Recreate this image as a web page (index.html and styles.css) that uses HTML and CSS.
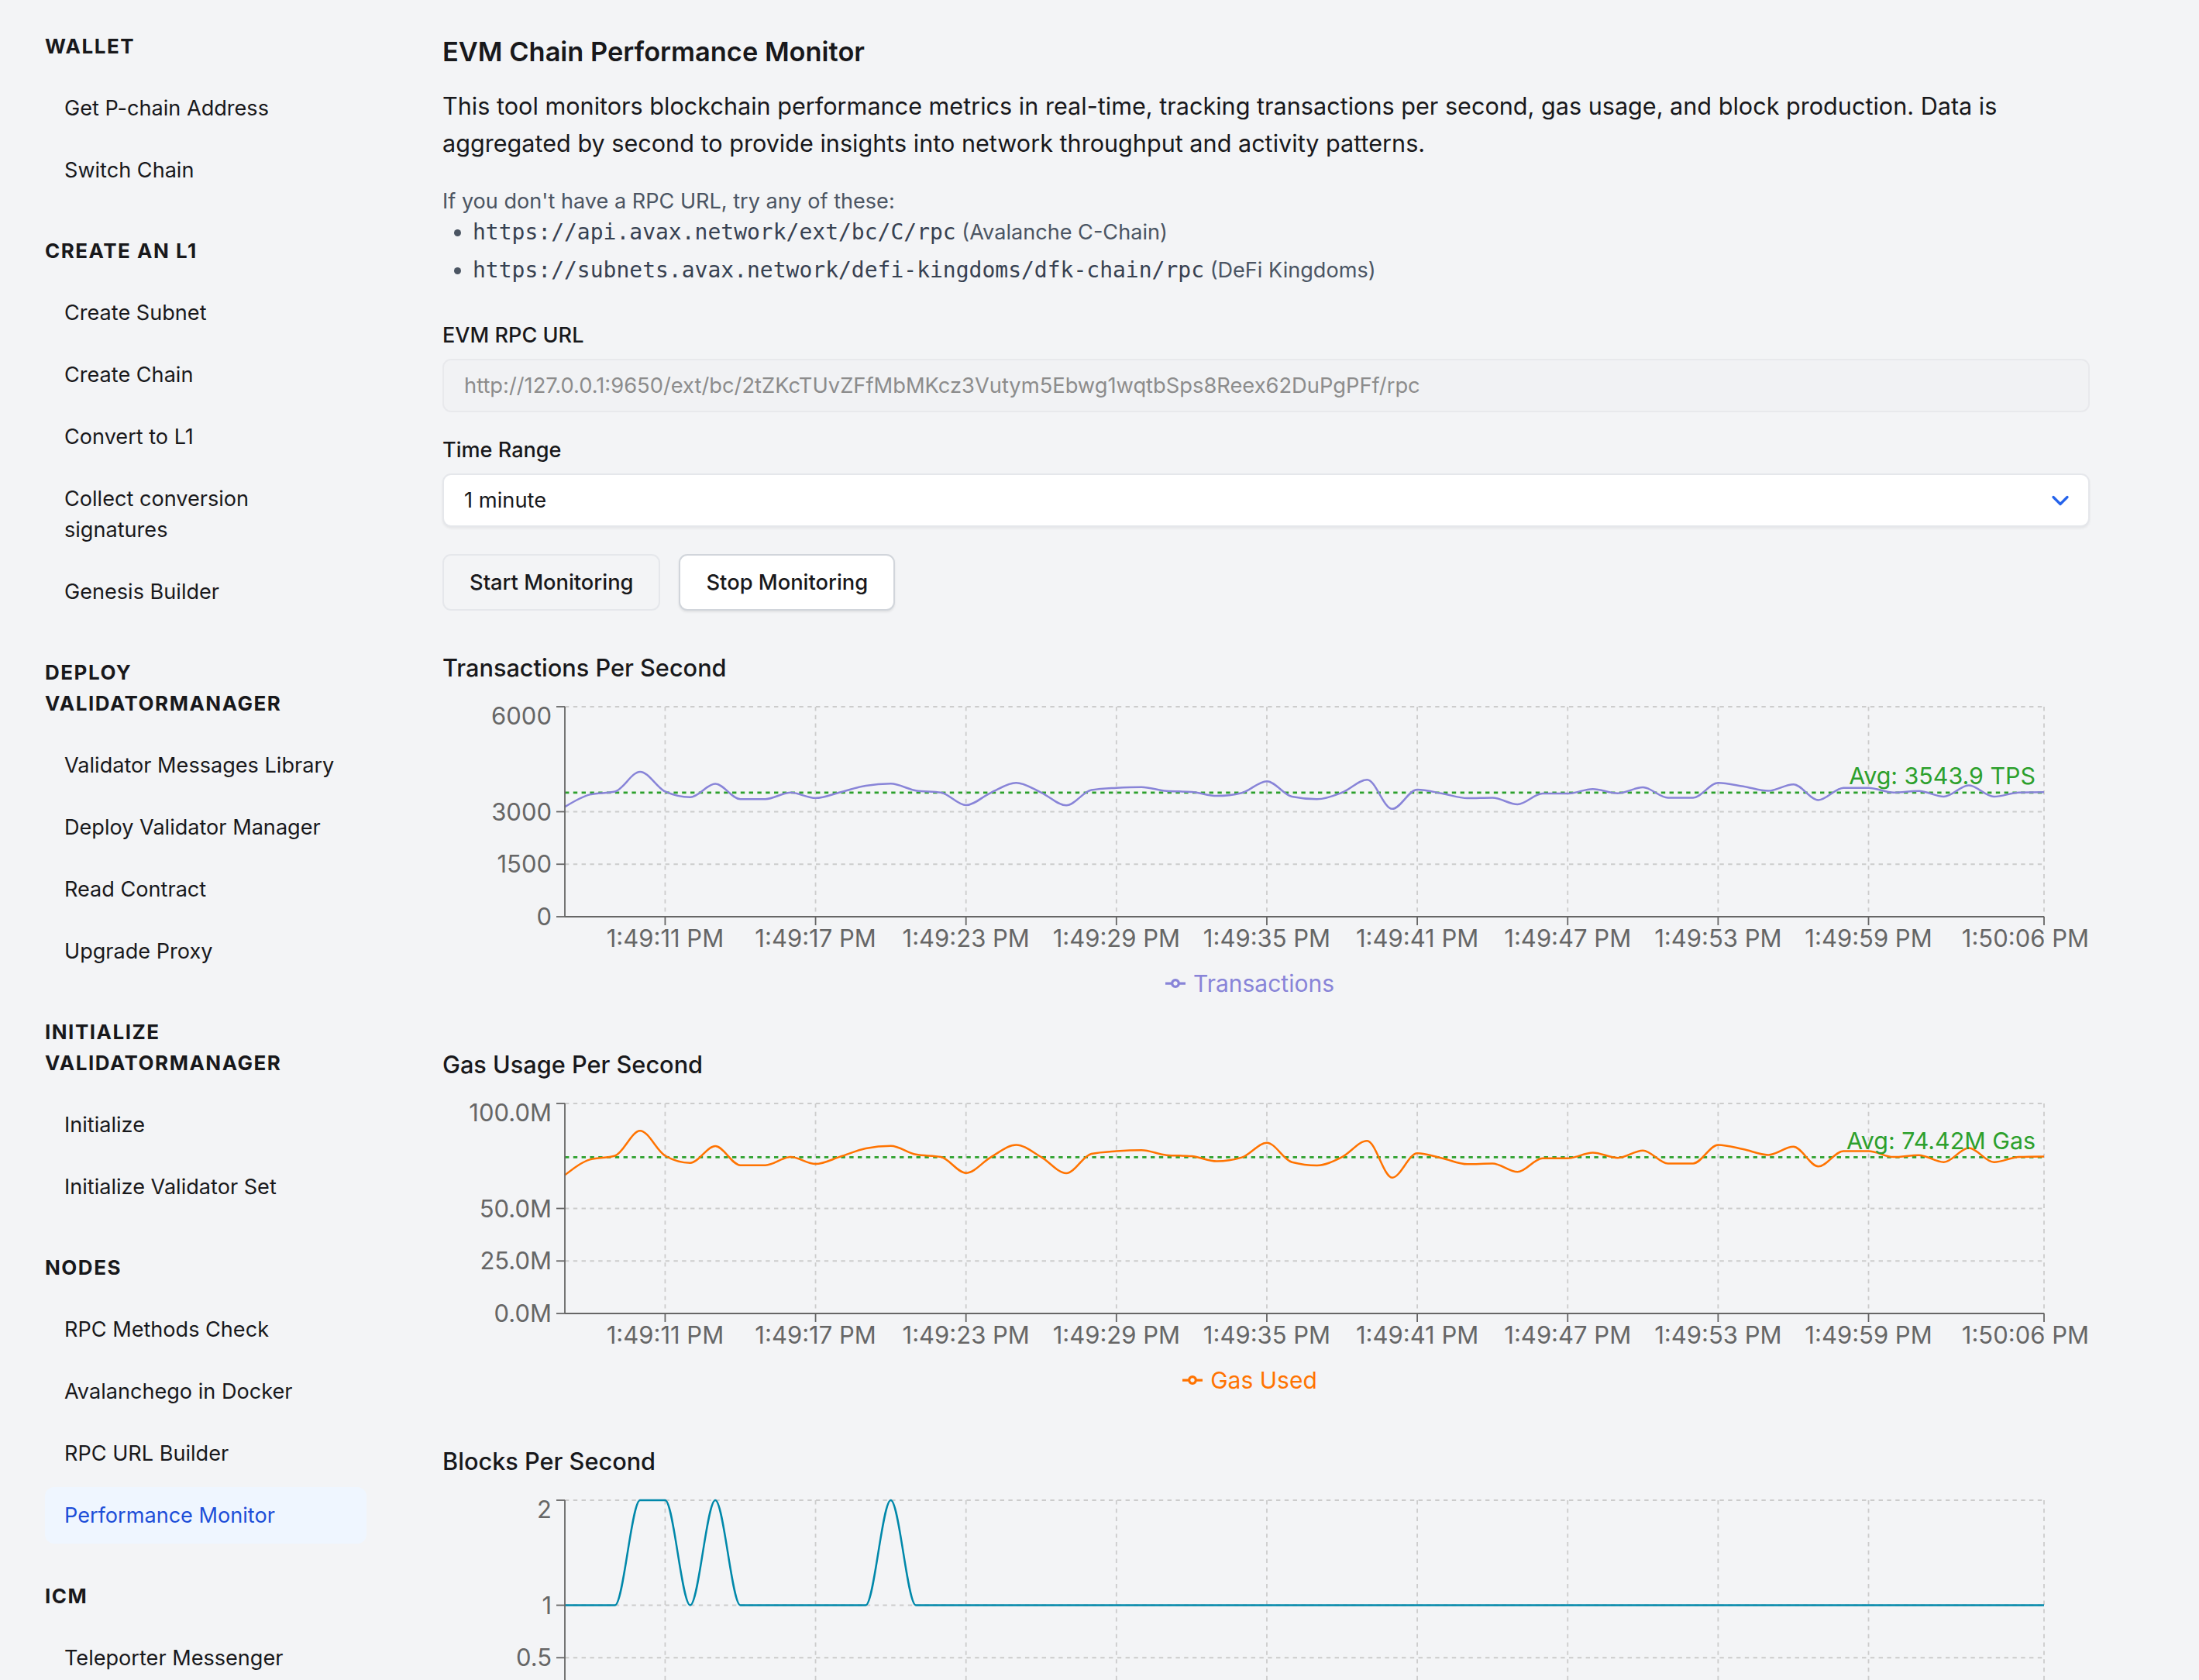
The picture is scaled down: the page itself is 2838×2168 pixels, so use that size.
FILE: index.html
```html
<!DOCTYPE html>
<html lang="en">
<head>
<meta charset="utf-8">
<title>EVM Chain Performance Monitor</title>
<link rel="stylesheet" href="styles.css">
</head>
<body>
<div class="layout">
  <aside class="sidebar">
    <nav>
      <section class="nav-section">
        <h4 class="nav-heading">Wallet</h4>
        <ul class="nav-list">
          <li><a class="nav-item">Get P-chain Address</a></li>
          <li><a class="nav-item">Switch Chain</a></li>
        </ul>
      </section>
      <section class="nav-section">
        <h4 class="nav-heading">Create an L1</h4>
        <ul class="nav-list">
          <li><a class="nav-item">Create Subnet</a></li>
          <li><a class="nav-item">Create Chain</a></li>
          <li><a class="nav-item">Convert to L1</a></li>
          <li><a class="nav-item">Collect conversion signatures</a></li>
          <li><a class="nav-item">Genesis Builder</a></li>
        </ul>
      </section>
      <section class="nav-section">
        <h4 class="nav-heading">Deploy ValidatorManager</h4>
        <ul class="nav-list">
          <li><a class="nav-item">Validator Messages Library</a></li>
          <li><a class="nav-item">Deploy Validator Manager</a></li>
          <li><a class="nav-item">Read Contract</a></li>
          <li><a class="nav-item">Upgrade Proxy</a></li>
        </ul>
      </section>
      <section class="nav-section">
        <h4 class="nav-heading">Initialize ValidatorManager</h4>
        <ul class="nav-list">
          <li><a class="nav-item">Initialize</a></li>
          <li><a class="nav-item">Initialize Validator Set</a></li>
        </ul>
      </section>
      <section class="nav-section">
        <h4 class="nav-heading">Nodes</h4>
        <ul class="nav-list">
          <li><a class="nav-item">RPC Methods Check</a></li>
          <li><a class="nav-item">Avalanchego in Docker</a></li>
          <li><a class="nav-item">RPC URL Builder</a></li>
          <li><a class="nav-item active">Performance Monitor</a></li>
        </ul>
      </section>
      <section class="nav-section">
        <h4 class="nav-heading">ICM</h4>
        <ul class="nav-list">
          <li><a class="nav-item">Teleporter Messenger</a></li>
        </ul>
      </section>
    </nav>
  </aside>

  <main class="main">
    <h2 class="title">EVM Chain Performance Monitor</h2>
    <p class="intro">This tool monitors blockchain performance metrics in real-time, tracking transactions per second, gas usage, and block production. Data is aggregated by second to provide insights into network throughput and activity patterns.</p>

    <div class="hint">
      <p>If you don't have a RPC URL, try any of these:</p>
      <ul class="hint-list">
        <li><code class="code">https://api.avax.network/ext/bc/C/rpc</code> (Avalanche C-Chain)</li>
        <li><code class="code">https://subnets.avax.network/defi-kingdoms/dfk-chain/rpc</code> (DeFi Kingdoms)</li>
      </ul>
    </div>

    <div class="field field-first">
      <label class="field-label">EVM RPC URL</label>
      <input class="input" type="text" disabled value="http://127.0.0.1:9650/ext/bc/2tZKcTUvZFfMbMKcz3Vutym5Ebwg1wqtbSps8Reex62DuPgPFf/rpc">
    </div>

    <div class="field">
      <label class="field-label">Time Range</label>
      <div class="select">
        <span>1 minute</span>
        <svg class="chevron" viewBox="0 0 24 24" width="36" height="36" aria-hidden="true"><path d="m6 9 6 6 6-6"/></svg>
      </div>
    </div>

    <div class="actions">
      <button class="btn btn-muted" type="button">Start Monitoring</button>
      <button class="btn btn-white" type="button">Stop Monitoring</button>
    </div>

    <section class="chart-block">
      <h3 class="chart-title">Transactions Per Second</h3>
      <div class="chart" data-chart="tps"></div>
      <div class="legend legend-tps">
        <svg class="legend-icon" viewBox="0 0 32 32" width="26" height="26"><path d="M0,16h10.67A5.33,5.33,0,1,1,21.33,16H32M21.33,16A5.33,5.33,0,1,1,10.67,16"/></svg>
        <span>Transactions</span>
      </div>
    </section>

    <section class="chart-block">
      <h3 class="chart-title">Gas Usage Per Second</h3>
      <div class="chart" data-chart="gas"></div>
      <div class="legend legend-gas">
        <svg class="legend-icon" viewBox="0 0 32 32" width="26" height="26"><path d="M0,16h10.67A5.33,5.33,0,1,1,21.33,16H32M21.33,16A5.33,5.33,0,1,1,10.67,16"/></svg>
        <span>Gas Used</span>
      </div>
    </section>

    <section class="chart-block">
      <h3 class="chart-title">Blocks Per Second</h3>
      <div class="chart" data-chart="blocks"></div>
      <div class="legend legend-blocks">
        <svg class="legend-icon" viewBox="0 0 32 32" width="26" height="26"><path d="M0,16h10.67A5.33,5.33,0,1,1,21.33,16H32M21.33,16A5.33,5.33,0,1,1,10.67,16"/></svg>
        <span>Blocks</span>
      </div>
    </section>
  </main>
</div>
<script src="script.js"></script>
</body>
</html>
```

FILE: styles.css
```css
* { box-sizing: border-box; margin: 0; padding: 0; }
html, body { background: #f3f4f6; }
body {
  font-family: Inter, "Noto Sans", sans-serif;
  color: #18181b;
}
.layout { display: flex; align-items: flex-start; }

/* Sidebar */
.sidebar { width: 500px; flex: none; padding: 40px 27px 0 58px; }
.nav-section + .nav-section { margin-top: 48px; }
.nav-heading {
  font-size: 26px;
  font-weight: 700;
  text-transform: uppercase;
  letter-spacing: 1.5px;
  line-height: 40px;
  color: #18181b;
}
.nav-list { list-style: none; margin-top: 23px; display: flex; flex-direction: column; gap: 7px; }
.nav-item {
  display: block;
  padding: 16.5px 25px;
  line-height: 40px;
  font-size: 27.1px;
  color: #18181b;
  border-radius: 12px;
}
.nav-item.active { background: #eff6ff; color: #1d4ed8; }

/* Main */
.main { flex: 1; min-width: 0; padding: 43px 141px 0 71px; }
.title { font-size: 34.4px; font-weight: 600; line-height: 48px; }
.intro { margin-top: 22px; font-size: 30.6px; line-height: 48px; }
.hint { margin-top: 33px; font-size: 27.1px; line-height: 36px; color: #4b5563; }
.hint-list { list-style: disc; padding-left: 39px; }
.hint-list li { line-height: 44px; }
.hint-list li + li { margin-top: 5px; }
.code { font-family: "DejaVu Sans Mono", "Liberation Mono", monospace; font-size: 28px; line-height: 1; color: #374151; }

.field { margin-top: 31px; }
.field-first { margin-top: 44px; }
.field-label { display: block; font-size: 27.1px; font-weight: 500; line-height: 36px; }
.input {
  display: block;
  width: 100%;
  height: 69px;
  margin-top: 12px;
  padding: 0 26px;
  border: 2px solid #e8e9ec;
  border-radius: 11px;
  background: #f1f2f4;
  color: #8c8c8c;
  font-family: inherit;
  font-size: 27.3px;
}
.select {
  display: flex;
  align-items: center;
  justify-content: space-between;
  height: 69px;
  margin-top: 12px;
  padding: 0 18px 0 26px;
  background: #ffffff;
  border: 2px solid #e5e7eb;
  border-radius: 11px;
  box-shadow: 0 2px 3px rgba(0, 0, 0, 0.06);
  font-size: 27.3px;
}
.chevron { fill: none; stroke: #2563eb; stroke-width: 2.2; stroke-linecap: round; stroke-linejoin: round; }

.actions { display: flex; gap: 24px; margin-top: 35px; }
.btn {
  height: 73px;
  padding: 0 33px;
  border-radius: 11px;
  font-family: inherit;
  font-size: 27.3px;
  font-weight: 500;
  color: #18181b;
}
.btn-muted { background: #f3f4f6; border: 2px solid #e5e7eb; }
.btn-white { background: #ffffff; border: 2px solid #d1d5db; box-shadow: 0 2px 3px rgba(0, 0, 0, 0.08); }

/* Charts */
.chart-block { margin-top: 63px; }
.actions + .chart-block { margin-top: 52px; }
.chart-title { font-size: 30.7px; font-weight: 500; line-height: 44px; }
.chart { margin-top: 16px; height: 349px; }
.chart-svg { display: block; overflow: visible; }
.grid { stroke: #cccccc; stroke-width: 1.8; stroke-dasharray: 5.4 5.4; }
.axis { stroke: #666666; stroke-width: 1.8; }
.tick-label { font-size: 31px; fill: #666666; }
.avg-line { stroke: #2ca02c; stroke-width: 2.7; stroke-dasharray: 5.4 5.4; }
.avg-label { font-size: 30.4px; fill: #2ca02c; }
.series { fill: none; stroke-width: 2.5; }

.legend {
  display: flex;
  align-items: center;
  justify-content: center;
  gap: 10px;
  height: 40px;
  padding-right: 42px;
  font-size: 30px;
}
.legend-icon { fill: none; stroke-width: 4; }
.legend-tps { color: #8884d8; }
.legend-tps .legend-icon { stroke: #8884d8; }
.legend-gas { color: #ff7300; }
.legend-gas .legend-icon { stroke: #ff7300; }
.legend-blocks { color: #0088aa; }
.legend-blocks .legend-icon { stroke: #0088aa; }
```

FILE: script.js
```js
(function () {
  var gas = [65.9,73.3,75.1,87.0,75.1,71.7,79.7,70.6,70.6,74.5,71.2,74.75,78.6,79.8,75.7,74.5,66.9,74.5,80.3,74.5,
             66.8,76.0,77.3,77.8,75.4,74.9,72.5,74.3,81.3,72.05,70.5,74.5,82.2,64.7,76.3,73.9,71.1,71.4,67.4,73.9,
             73.9,76.6,74.1,77.6,71.4,71.4,80.3,78.2,75.5,79.4,70.0,77.3,77.3,74.5,75.4,72.05,78.8,72.05,74.5,74.75];
  var gasM = gas.map(function (g) { return g * 1e6; });
  var tps = gas.map(function (g) { return g * 1e6 / 21000; });
  var blocks = [];
  for (var b = 0; b < 60; b++) blocks.push(1);
  [3, 4, 6, 13].forEach(function (i) { blocks[i] = 2; });

  var W = 2125, PL = 158, PR = 2067, PT = 12, PH = 271, H = 349, N = 60;
  var tickIdx = [4, 10, 16, 22, 28, 34, 40, 46, 52, 59];
  function xs(i) { return PL + i * (PR - PL) / (N - 1); }
  function timeLabel(i) {
    var s = 7 + i, m = 49 + Math.floor(s / 60), sec = s % 60;
    return '1:' + m + ':' + (sec < 10 ? '0' : '') + sec + ' PM';
  }
  function sign(v) { return v < 0 ? -1 : 1; }
  function monotone(p) {
    var n = p.length, t = new Array(n), i;
    for (i = 1; i < n - 1; i++) {
      var h0 = p[i][0] - p[i - 1][0], h1 = p[i + 1][0] - p[i][0];
      var s0 = (p[i][1] - p[i - 1][1]) / h0, s1 = (p[i + 1][1] - p[i][1]) / h1;
      var q = (s0 * h1 + s1 * h0) / (h0 + h1);
      t[i] = (sign(s0) + sign(s1)) * Math.min(Math.abs(s0), Math.abs(s1), 0.5 * Math.abs(q)) || 0;
    }
    var m0 = (p[1][1] - p[0][1]) / (p[1][0] - p[0][0]);
    var mn = (p[n - 1][1] - p[n - 2][1]) / (p[n - 1][0] - p[n - 2][0]);
    t[0] = n > 2 ? (3 * m0 - t[1]) / 2 : m0;
    t[n - 1] = n > 2 ? (3 * mn - t[n - 2]) / 2 : mn;
    var d = 'M' + p[0][0].toFixed(2) + ',' + p[0][1].toFixed(2);
    for (i = 0; i < n - 1; i++) {
      var dx = (p[i + 1][0] - p[i][0]) / 3;
      d += 'C' + (p[i][0] + dx).toFixed(2) + ',' + (p[i][1] + dx * t[i]).toFixed(2) + ',' +
        (p[i + 1][0] - dx).toFixed(2) + ',' + (p[i + 1][1] - dx * t[i + 1]).toFixed(2) + ',' +
        p[i + 1][0].toFixed(2) + ',' + p[i + 1][1].toFixed(2);
    }
    return d;
  }

  var configs = {
    tps: { data: tps, max: 6000, ticks: [[0, '0'], [1500, '1500'], [3000, '3000'], [6000, '6000']], color: '#8884d8', avg: 3543.9, avgLabel: 'Avg: 3543.9 TPS' },
    gas: { data: gasM, max: 100e6, ticks: [[0, '0.0M'], [25e6, '25.0M'], [50e6, '50.0M'], [100e6, '100.0M']], color: '#ff7300', avg: 74.42e6, avgLabel: 'Avg: 74.42M Gas' },
    blocks: { data: blocks, max: 2, ticks: [[0, '0'], [0.5, '0.5'], [1, '1'], [2, '2']], color: '#0088aa' }
  };

  function build(el, c) {
    function y(v) { return PT + PH - v / c.max * PH; }
    var s = '<svg class="chart-svg" width="' + W + '" height="' + H + '" viewBox="0 0 ' + W + ' ' + H + '">';
    c.ticks.forEach(function (t) {
      if (t[0] === 0) return;
      s += '<line class="grid" x1="' + PL + '" x2="' + PR + '" y1="' + y(t[0]) + '" y2="' + y(t[0]) + '"/>';
    });
    tickIdx.forEach(function (i) {
      s += '<line class="grid" x1="' + xs(i) + '" x2="' + xs(i) + '" y1="' + PT + '" y2="' + (PT + PH) + '"/>';
    });
    if (c.avg != null) {
      s += '<line class="avg-line" x1="' + PL + '" x2="' + PR + '" y1="' + y(c.avg) + '" y2="' + y(c.avg) + '"/>';
    }
    var pts = c.data.map(function (v, i) { return [xs(i), y(v)]; });
    s += '<path class="series" stroke="' + c.color + '" d="' + monotone(pts) + '"/>';
    if (c.avg != null) {
      s += '<text class="avg-label" x="' + (PR - 11) + '" y="' + (y(c.avg) - 10.5) + '" text-anchor="end">' + c.avgLabel + '</text>';
    }
    s += '<line class="axis" x1="' + PL + '" x2="' + PL + '" y1="' + PT + '" y2="' + (PT + PH) + '"/>';
    s += '<line class="axis" x1="' + PL + '" x2="' + PR + '" y1="' + (PT + PH) + '" y2="' + (PT + PH) + '"/>';
    c.ticks.forEach(function (t) {
      var ty = y(t[0]);
      s += '<line class="axis" x1="' + (PL - 11) + '" x2="' + PL + '" y1="' + ty + '" y2="' + ty + '"/>';
      s += '<text class="tick-label" x="' + (PL - 17) + '" y="' + Math.max(ty, PT + 12) + '" dy="0.355em" text-anchor="end">' + t[1] + '</text>';
    });
    tickIdx.forEach(function (i, k) {
      var x = xs(i), last = k === tickIdx.length - 1;
      s += '<line class="axis" x1="' + x + '" x2="' + x + '" y1="' + (PT + PH) + '" y2="' + (PT + PH + 11) + '"/>';
      s += '<text class="tick-label" x="' + (last ? W : x) + '" y="' + (PT + PH + 28) + '" dy="0.355em" text-anchor="' + (last ? 'end' : 'middle') + '">' + timeLabel(i) + '</text>';
    });
    s += '</svg>';
    el.innerHTML = s;
  }

  var els = document.querySelectorAll('[data-chart]');
  for (var k = 0; k < els.length; k++) build(els[k], configs[els[k].getAttribute('data-chart')]);
})();
```
